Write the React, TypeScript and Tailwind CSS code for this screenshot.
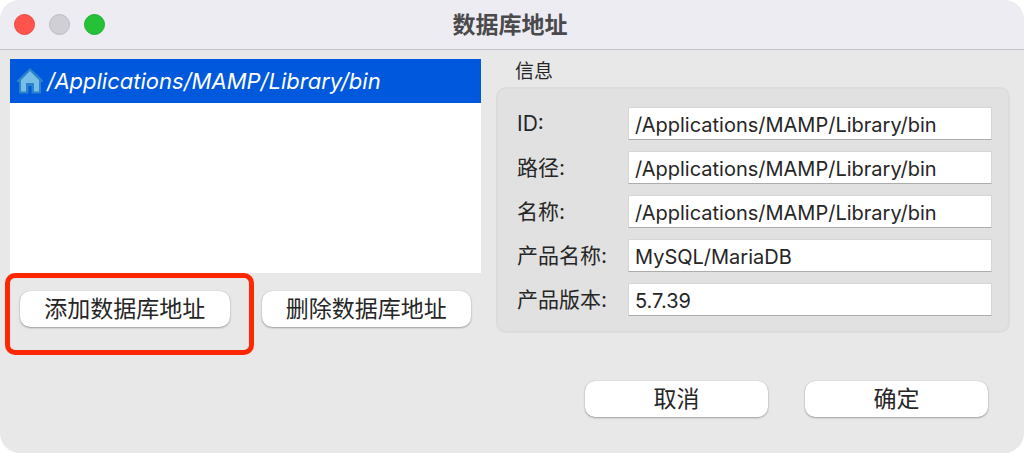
import type { ReactNode } from 'react';

const fields = [
  { id: 'location-id', label: 'ID:', value: '/Applications/MAMP/Library/bin' },
  { id: 'location-path', label: '路径:', value: '/Applications/MAMP/Library/bin' },
  { id: 'location-name', label: '名称:', value: '/Applications/MAMP/Library/bin' },
  { id: 'product-name', label: '产品名称:', value: 'MySQL/MariaDB' },
  { id: 'product-version', label: '产品版本:', value: '5.7.39' },
];

function PushButton({ className, children }: { className: string; children: ReactNode }) {
  return (
    <button
      type="button"
      className={`h-9 rounded-[10px] bg-white text-[23px] leading-8 text-[#262626] shadow-[0_1px_2px_rgba(0,0,0,0.3),0_0_1px_rgba(0,0,0,0.25)] ${className}`}
    >
      {children}
    </button>
  );
}

function HomeIcon() {
  return (
    <svg width="26" height="26" viewBox="0 0 26 26" className="shrink-0" aria-hidden="true">
      <path d="M13 0 20 6.5 26 12.5V14H24V25.5H14.5V18H11.5V25.5H2V14H0V12.5z" fill="#2a83cb" />
      <path d="M13 3 22 12V23.5H17V15H9V23.5H4V12z" fill="#78bfe8" />
    </svg>
  );
}

export default function App() {
  return (
    <div className="min-h-screen bg-white font-[Inter,'Noto_Sans_CJK_SC',sans-serif] text-[#262626]">
      <div className="flex min-h-screen flex-col overflow-hidden rounded-[20px] bg-[#e8e8e8]">
        <header className="grid h-[50px] shrink-0 grid-cols-[1fr_auto_1fr] items-center border-b border-[#c3c2c7] bg-[#edecf2] pr-[18px] pl-3.5">
          <div className="flex gap-3.5">
            <button type="button" aria-label="关闭" className="size-[21px] rounded-full border border-[#e8473f] bg-[#ff544d]" />
            <button type="button" aria-label="最小化" className="size-[21px] rounded-full border border-[#bcbbc0] bg-[#d0cfd5]" />
            <button type="button" aria-label="缩放" className="size-[21px] rounded-full border border-[#1eae2f] bg-[#25c138]" />
          </div>
          <h1 className="text-[23px] leading-8 font-bold text-[#4a4a4c]">数据库地址</h1>
        </header>

        <main className="grid grid-cols-[471fr_514fr] gap-[15px] pt-[9px] pr-3.5 pl-2.5">
          <div>
            <ul className="h-[214px] bg-white">
              <li className="flex h-11 items-center gap-1 bg-[#0059dd] pl-[7px] text-white">
                <HomeIcon />
                <span className="text-[22px] leading-8 whitespace-nowrap italic">/Applications/MAMP/Library/bin</span>
              </li>
            </ul>
            <div className="mt-[18px] grid grid-cols-2 gap-8 px-2.5">
              <div className="relative grid">
                <PushButton className="w-full">添加数据库地址</PushButton>
                <span className="pointer-events-none absolute -top-[18px] -right-6 -bottom-7 -left-[15px] rounded-[10px] border-5 border-[#ff2600]" />
              </div>
              <PushButton className="w-full">删除数据库地址</PushButton>
            </div>
          </div>

          <section>
            <h2 className="pt-px pl-[19px] text-[19px] leading-6">信息</h2>
            <div className="mt-[3px] flex flex-col gap-[11px] rounded-[10px] border-2 border-[#dcdcdc] bg-[#e1e1e1] pt-[18px] pr-4 pb-[15px] pl-[19px]">
              {fields.map((field) => (
                <div key={field.id} className="flex h-[33px] items-center">
                  <label htmlFor={field.id} className="w-[111px] shrink-0 text-[21px] leading-8">
                    {field.label}
                  </label>
                  <input
                    id={field.id}
                    type="text"
                    readOnly
                    defaultValue={field.value}
                    className="h-[33px] w-full min-w-0 border border-[#d6d6d6] border-b-[#acacac] bg-white px-1.5 pt-[3px] text-[20px] outline-none"
                  />
                </div>
              ))}
            </div>
          </section>
        </main>

        <footer className="mt-12 flex justify-end gap-[37px] pr-9 pb-9">
          <PushButton className="w-[183px]">取消</PushButton>
          <PushButton className="w-[183px]">确定</PushButton>
        </footer>
      </div>
    </div>
  );
}
